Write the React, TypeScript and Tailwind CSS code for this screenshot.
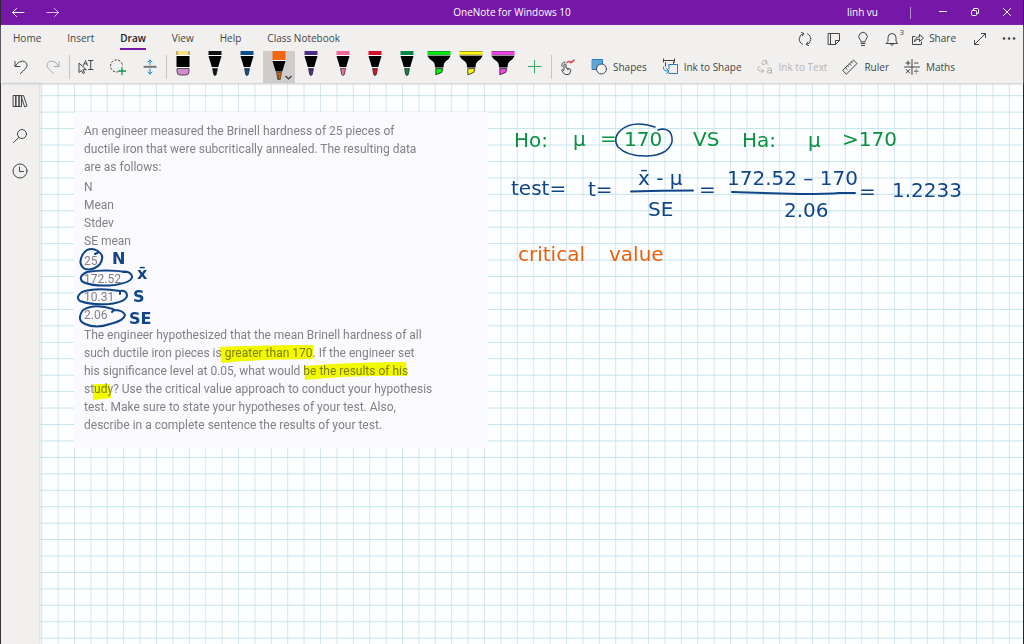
import type { ReactNode } from "react";

const TABS = ["Home", "Insert", "Draw", "View", "Help", "Class Notebook"];

const PENS = [
  { name: "Black pen", color: "#111111" },
  { name: "Blue pen", color: "#0b4f8f" },
  { name: "Orange pen", color: "#f2660f", selected: true },
  { name: "Purple pen", color: "#4f2d86" },
  { name: "Pink pen", color: "#f0679a" },
  { name: "Red pen", color: "#d3122a" },
  { name: "Green pen", color: "#0c8442" },
];

const HIGHLIGHTERS = [
  { name: "Green highlighter", color: "#00f010" },
  { name: "Yellow highlighter", color: "#fdf510" },
  { name: "Magenta highlighter", color: "#f044ea" },
];

const GREEN = "#0c9040";
const BLUE = "#0f4586";
const ORANGE = "#e8600e";

// Handwritten words on the canvas, in page coordinates
const NOTES = [
  { x: 514, y: 147, text: "Ho:", color: GREEN },
  { x: 573, y: 146, text: "μ", color: GREEN },
  { x: 600, y: 145, text: "=", color: GREEN },
  { x: 624, y: 146, text: "170", color: GREEN },
  { x: 693, y: 146, text: "VS", color: GREEN },
  { x: 742, y: 147, text: "Ha:", color: GREEN },
  { x: 808, y: 147, text: "μ", color: GREEN },
  { x: 842, y: 146, text: ">170", color: GREEN },
  { x: 511, y: 195, text: "test=", color: BLUE },
  { x: 588, y: 196, text: "t=", color: BLUE },
  { x: 638, y: 185, text: "x̄ - μ", color: BLUE },
  { x: 648, y: 216, text: "SE", color: BLUE },
  { x: 699, y: 196, text: "=", color: BLUE },
  { x: 727, y: 185, text: "172.52 – 170", color: BLUE },
  { x: 784, y: 217, text: "2.06", color: BLUE },
  { x: 859, y: 198, text: "=", color: BLUE },
  { x: 892, y: 197, text: "1.2233", color: BLUE },
  { x: 518, y: 261, text: "critical", color: ORANGE },
  { x: 609, y: 261, text: "value", color: ORANGE },
];

const LABELS = [
  { x: 112, y: 264, text: "N" },
  { x: 137, y: 279, text: "x̄" },
  { x: 133, y: 302, text: "S" },
  { x: 129, y: 324, text: "SE" },
];

function Icon({
  size = 18,
  className = "",
  children,
}: {
  size?: number;
  className?: string;
  children: ReactNode;
}) {
  return (
    <svg
      width={size}
      height={size}
      viewBox={`0 0 ${size} ${size}`}
      fill="none"
      stroke="currentColor"
      strokeLinecap="round"
      strokeLinejoin="round"
      className={`shrink-0 ${className}`}
      aria-hidden="true"
    >
      {children}
    </svg>
  );
}

function ToolButton({
  label,
  className = "",
  children,
}: {
  label: string;
  className?: string;
  children: ReactNode;
}) {
  return (
    <button
      type="button"
      aria-label={label}
      className={`flex h-8 w-8 shrink-0 items-center justify-center ${className}`}
    >
      {children}
    </button>
  );
}

function Separator() {
  return <span className="mt-1 h-6 w-px shrink-0 bg-[#c8c6c4]" />;
}

function PenIcon({ color, selected }: { color: string; selected?: boolean }) {
  if (selected) {
    return (
      <svg width="32" height="32" viewBox="0 0 32 32" aria-hidden="true">
        <path d="M9.5 0h13v9h-13z" fill={color} />
        <path d="M9.5 9h13v1h-13z" fill="#fff" />
        <path d="M9.5 10h13l-3.2 10.500h-6.600z" fill="#000" />
        <path d="M13.500 21.500h5l-1.300 7h-2.400z" fill={color} stroke="#333" strokeWidth=".7" />
        <path d="M15.600 23v5" stroke="#632b10" strokeWidth=".8" />
        <path d="m22.500 25 3 3 3-3" fill="none" stroke="#333" strokeWidth="1.200" />
      </svg>
    );
  }
  return (
    <svg width="32" height="32" viewBox="0 0 32 32" aria-hidden="true">
      <path d="M9.5 0h13v4h-13z" fill={color} />
      <path d="M9.5 4h13v1h-13z" fill="#fff" />
      <path d="M9.5 5h13l-3.300 11h-6.400z" fill="#000" />
      <path d="M13.500 17.500h5l-1.200 6q-1.300 2-2.600 0z" fill={color} stroke="#222" strokeWidth=".7" />
    </svg>
  );
}

function HighlighterIcon({ color }: { color: string }) {
  return (
    <svg width="32" height="32" viewBox="0 0 32 32" aria-hidden="true">
      <path d="M4.500 0h23v4h-23z" fill={color} />
      <path d="M4.500 0h23v.5h-23zM4.500 3.800h23v.6h-23z" fill="#444" />
      <path d="M4.500 5h23q-1 3-5 5.500-2 1.500-2 6h-8.500q0-4.500-2-6-4-2.500-5.500-5.500z" fill="#000" />
      <path d="M12.800 17.600h7l-1 3.800-6 2.400z" fill={color} stroke="#222" strokeWidth=".8" />
    </svg>
  );
}

function TitleBar() {
  return (
    <header className="grid h-[25px] grid-cols-[1fr_auto_1fr] items-center bg-[#7518a8] text-[10px] text-white">
      <div className="flex items-center">
        <button type="button" aria-label="Back" className="flex w-[34px] justify-center">
          <Icon size={14}>
            <path d="M13 6.500H1.500M5.500 2.500l-4 4 4 4" />
          </Icon>
        </button>
        <button type="button" aria-label="Forward" className="flex w-9 justify-center text-white/70">
          <Icon size={14}>
            <path d="M1 6.500h11.500M8.500 2.500l4 4-4 4" />
          </Icon>
        </button>
      </div>
      <h1>OneNote for Windows 10</h1>
      <div className="flex items-center justify-end">
        <span className="mr-8">linh vu</span>
        <span className="h-3 w-px bg-white/50" />
        <button type="button" aria-label="Minimise" className="ml-4 flex w-8 justify-center">
          <Icon size={10}>
            <path d="M1.500 3.500h7" />
          </Icon>
        </button>
        <button type="button" aria-label="Restore" className="flex w-8 justify-center">
          <Icon size={10}>
            <rect x="1.500" y="2.500" width="5" height="5" rx="1" />
            <path d="M3.500 2.500V1q0-.5.500-.5h3.500q1 0 1 1v3.500q0 .5-.5.500h-1" />
          </Icon>
        </button>
        <button type="button" aria-label="Close" className="flex w-8 justify-center">
          <Icon size={10}>
            <path d="m1.500.5 7 7m0-7-7 7" />
          </Icon>
        </button>
      </div>
    </header>
  );
}

function MenuRow() {
  return (
    <div className="flex h-[25px] items-stretch justify-between pl-3 text-[10px]">
      <nav className="flex gap-[26px]">
        {TABS.map((tab) => (
          <button
            key={tab}
            type="button"
            className={
              tab === "Draw"
                ? "border-b-2 border-[#7518a8] pt-[3px] font-semibold text-[#222]"
                : "border-b-2 border-transparent pt-[3px]"
            }
          >
            {tab}
          </button>
        ))}
      </nav>
      <div className="flex items-center pt-[2px]">
        <button type="button" aria-label="Sync" className="flex w-[29px] justify-center">
          <Icon size={16}>
            <path d="M5.500 13.200A5.800 5.800 0 0 1 6.500 2.400M10.500 2.800a5.800 5.800 0 0 1-1 10.800M4.500 1.500l2.200 1-1.200 2.300M11.500 14.500l-2.200-1 1.200-2.300" />
          </Icon>
        </button>
        <button type="button" aria-label="Feed" className="flex w-[29px] justify-center">
          <Icon size={14}>
            <path d="M1.500 1.500h11v7l-4 4h-7zM3.500 1.500v11M12.500 8.500h-4v4" />
          </Icon>
        </button>
        <button type="button" aria-label="Tell me" className="flex w-[29px] justify-center">
          <Icon size={16}>
            <path d="M6 10.500Q6 9.500 5 8.500a4.200 4.200 0 1 1 6 0q-1 1-1 2zM6 12.500h4M6.500 14.500h3" />
          </Icon>
        </button>
        <button type="button" aria-label="Notifications" className="relative flex w-[29px] justify-center">
          <Icon size={16}>
            <path d="M2.500 12.500h11l-1.500-2.500V6.500a4 4 0 0 0-8 0V10zM6.500 13q1.500 3 3 0" />
          </Icon>
          <span className="absolute -top-1 right-[2px] text-[8px] leading-[10px]">3</span>
        </button>
        <button type="button" className="ml-[5px] flex items-center gap-1">
          <Icon size={14}>
            <path d="M4 4.500H1.500v8h9V10M3.500 9.500q.5-4.500 5-4.500V2.500L12.500 6 8.500 9.500V7Q5.500 7 3.500 9.500" />
          </Icon>
          Share
        </button>
        <button type="button" aria-label="Full screen" className="ml-[10px] flex w-[28px] justify-center">
          <Icon size={14}>
            <path d="m1.500 12.500 11-11M8.500 1.500h4v4M1.500 8.500v4h4" />
          </Icon>
        </button>
        <button type="button" aria-label="More" className="flex w-[29px] justify-center">
          <Icon size={14}>
            <path d="M2 6.500h.1M7 6.500h.1M12 6.500h.1" strokeWidth="2.600" />
          </Icon>
        </button>
      </div>
    </div>
  );
}

function DrawToolbar() {
  return (
    <div className="flex pt-px pl-1 text-[10px]">
      <ToolButton label="Undo">
        <Icon>
          <path d="M3 3.500v5h5M3 8.500Q6 3 10.500 3q4.500.5 4.500 4.500 0 2.500-6.500 8" />
        </Icon>
      </ToolButton>
      <ToolButton label="Redo" className="text-[#a8a8a8]">
        <Icon>
          <path d="M15 3.500v5h-5M15 8.500Q12 3 7.500 3 3 3.500 3 7.500q0 2.500 6.500 8" />
        </Icon>
      </ToolButton>
      <Separator />
      <ToolButton label="Select or type">
        <Icon>
          <path d="M2 5.500v9l2.500-2 1.500 3 1.500-.8-1.500-3h3z" />
          <path d="m6.500 7.500 2-5 2 5M7.300 5.800h2.500" strokeWidth=".9" />
          <path d="M11.500 2.500h2m0 0h2.500M13.700 2.500v9M11.500 11.500h4.500" />
        </Icon>
      </ToolButton>
      <ToolButton label="Lasso select">
        <Icon>
          <circle cx="7.500" cy="8" r="6" strokeDasharray="1.500 2.200" />
          <path d="M9 8h8v9H9z" fill="#f1f0ef" stroke="none" />
          <path d="M13 9.500v7M9.500 13h7" stroke="#10944c" strokeWidth="1.300" />
        </Icon>
      </ToolButton>
      <ToolButton label="Insert space">
        <Icon>
          <path d="M2.500 8.800h13" stroke="#777" strokeWidth="2" strokeLinecap="butt" />
          <path d="M9 6.500v-4.500M7 4l2-2 2 2M9 11v5M7 14l2 2 2-2" stroke="#1682c9" />
        </Icon>
      </ToolButton>
      <Separator />
      <ToolButton label="Eraser">
        <svg width="32" height="32" viewBox="0 0 32 32" aria-hidden="true">
          <path d="M9.500 0h13v4h-13z" fill="#f6df86" />
          <path d="M9.500 0h1v4h-1zM21.500 0h1v4h-1z" fill="#8a7d50" />
          <path d="M9.500 4h13v1h-13zM9.500 16h13v1h-13z" fill="#fff" />
          <path d="M9.500 5h13v11h-13z" fill="#000" />
          <path d="M10 17.500h12v3q0 3.500-3 3.500h-6q-3 0-3-3.500z" fill="#d28ad2" stroke="#333" strokeWidth=".8" />
        </svg>
      </ToolButton>
      {PENS.map((pen) => (
        <ToolButton
          key={pen.name}
          label={pen.name}
          className={pen.selected ? "bg-[#cfcdcc]" : ""}
        >
          <PenIcon color={pen.color} selected={pen.selected} />
        </ToolButton>
      ))}
      {HIGHLIGHTERS.map((pen) => (
        <ToolButton key={pen.name} label={pen.name}>
          <HighlighterIcon color={pen.color} />
        </ToolButton>
      ))}
      <ToolButton label="Add pen" className="text-[#2fa562]">
        <Icon size={14}>
          <path d="M6.500 0v13M0 6.500h13" />
        </Icon>
      </ToolButton>
      <Separator />
      <ToolButton label="Draw with touch">
        <Icon>
          <path d="M5 11.500V6.500q1-1.500 2 0V10l4 1q1 .3.800 1.300L11 15Q10.500 16.500 9 16.500H7Q5.500 16.500 4.500 15L2.500 12q1-1.500 2.500.5M9 10.500v1.500" />
          <path d="M3 8.500q-1-4.500 3-4.500" />
          <path d="M8 4.500q2-2 3-.5t4-2" stroke="#e0343c" strokeWidth="1.400" />
        </Icon>
      </ToolButton>
      <button type="button" className="ml-[6px] flex items-center gap-[5px]">
        <Icon>
          <path d="M2.500 1.500h10v10h-10z" fill="#5ba7dc" stroke="#257dbe" />
          <circle cx="11.500" cy="11" r="5" fill="#f5f4f3" stroke="#444" />
        </Icon>
        Shapes
      </button>
      <button type="button" className="ml-[14px] flex items-center gap-[5px]">
        <Icon>
          <path d="M3 2.500h10M2.500 1v3M13.500 1v3" />
          <path d="M4.500 4.500V8M12.500 4v1.500" />
          <path d="M8 6.500h8.500v9H8v-1M8 6.500V11" stroke="#257dbe" />
          <path d="M2.500 9q-1 4.500 5 4M5.500 10.500l2.500 2.500-2.500 2.500" stroke="#257dbe" />
        </Icon>
        Ink to Shape
      </button>
      <button type="button" disabled className="ml-[14px] flex items-center gap-[5px] text-[#b5b3b2]">
        <Icon>
          <path d="M10.500 2.500Q6.500 1.500 6 5q0 2 2 1.500 2-1 2.500-4-.5 4 1.500 4" />
          <path d="M3.500 8.500q-4 3 1 4.500h3M5.500 11l2 2-2 2" />
          <path d="M11.500 10.500q3-1.500 4 .5v4.500M15.500 12.500q-5-.5-4.500 1.500 1.500 2.500 4.500 0" />
        </Icon>
        Ink to Text
      </button>
      <button type="button" className="ml-[14px] flex items-center gap-[5px]">
        <Icon>
          <path d="M2 12 12.500 2 16 5.500 5.500 16zM4.500 9.700l1.500 1.500M6.500 7.800l1 1M8.500 5.800l1.500 1.500M10.500 4l1 1" />
        </Icon>
        Ruler
      </button>
      <button type="button" className="ml-[14px] flex items-center gap-[5px]">
        <Icon>
          <path d="M9 1.500v15M1.500 9h15M3 5h4M5 3v4M11.500 5H15M3.200 11.500l3.500 3.500m0-3.500L3.200 15M11.500 13.200H15M13.200 11.300h.1M13.200 15.200h.1" />
        </Icon>
        Maths
      </button>
    </div>
  );
}

function SideBar() {
  return (
    <aside className="z-10 flex w-[38px] shrink-0 flex-col items-center gap-[3px] bg-[#f1f0ef] pt-[2px] shadow-[1px_0_2px_#d5d5d5]">
      <ToolButton label="Show navigation">
        <Icon>
          <path d="M2.500 3.500h2.500v11H2.500zM5 3.500h3v11H5zM8.500 3.500h2v11h-2zM10.500 4l2-.5 3.500 10.500-2 .7z" />
        </Icon>
      </ToolButton>
      <ToolButton label="Search">
        <Icon>
          <circle cx="11" cy="7" r="4.500" />
          <path d="M7.700 10.500 2.500 15.500" />
        </Icon>
      </ToolButton>
      <ToolButton label="Recent notes">
        <Icon>
          <circle cx="9" cy="9" r="7" />
          <path d="M8.500 5v4.500h4" />
        </Icon>
      </ToolButton>
    </aside>
  );
}

function RuledPaper() {
  return (
    <svg className="absolute inset-0 h-full w-full" aria-hidden="true">
      <defs>
        <pattern id="squares" x="2.200" y="12.200" width="16.400" height="16.440" patternUnits="userSpaceOnUse">
          <path d="M.5 0v17" stroke="#d3e5ee" />
          <path d="M0 .5h17" stroke="#c3e3ec" />
        </pattern>
      </defs>
      <rect width="100%" height="100%" fill="url(#squares)" />
    </svg>
  );
}

function ProblemCard() {
  return (
    <article className="absolute top-[29px] left-[35px] flex w-[414px] flex-col gap-[2px] bg-[#f9f9fe] pt-[10px] pr-10 pb-[14px] pl-[10px] font-[Roboto,sans-serif] text-[12px] leading-[18px] text-[#808086]">
      <p>
        An engineer measured the Brinell hardness of 25 pieces of
        <br />
        ductile iron that were subcritically annealed. The resulting data
        <br />
        are as follows:
      </p>
      <ul>
        <li>N</li>
        <li>Mean</li>
        <li>Stdev</li>
        <li>SE mean</li>
      </ul>
      <ul>
        <li>25</li>
        <li>172.52</li>
        <li>10.31</li>
        <li>2.06</li>
      </ul>
      <p className="whitespace-nowrap">
        The engineer hypothesized that the mean Brinell hardness of all
        <br />
        such ductile iron pieces is greater than 170. If the engineer set
        <br />
        his significance level at 0.05, what would be the results of his
        <br />
        study? Use the critical value approach to conduct your hypothesis
        <br />
        test. Make sure to state your hypotheses of your test. Also,
        <br />
        describe in a complete sentence the results of your test.
      </p>
    </article>
  );
}

function Ink() {
  return (
    <>
      {/* highlighter strokes let the text show through */}
      <svg
        width="984"
        height="561"
        viewBox="39 83 984 561"
        className="pointer-events-none absolute top-0 left-0 mix-blend-multiply"
        aria-hidden="true"
      >
        <g fill="#f8ff00">
          <path d="M220 347q40-2 94-2l-1 14q-50 0-92 4z" />
          <path d="M304 366q50-4 102-4l1 14q-50-1-102 4z" />
          <path d="M93 384h17l1 14-18 2z" />
        </g>
      </svg>
      <svg
        width="984"
        height="561"
        viewBox="39 83 984 561"
        className="pointer-events-none absolute top-0 left-0 font-['DejaVu_Sans',sans-serif] text-[20px]"
      >
        <g fill="none" stroke={BLUE} strokeWidth="2" strokeLinecap="round" strokeLinejoin="round">
          <path d="M98 251q-9-5-15 3-6 10 2 15 9 2 15-5 5-8-1-12l-4 2" />
          <path d="M127 272q-22-3-40 0-10 5-4 10 10 5 32 3 18-3 17-9-2-5-9-4" />
          <path d="M120 291q-24-4-38 1-7 5-2 9 10 4 29 3 18-2 18-9-1-5-7-4v3" />
          <path d="M113 309q-19-6-30 1-7 10 2 14 11 5 25 0 14-3 15-9-2-5-11-5l-2 2" />
          <path d="M631 191.500q30-1 62-1M732 192q30 1 68 2 30 0 39-1h16" />
        </g>
        <path
          d="M655 127q-22-7-34 3-9 8-3 17 10 10 30 9 20-1 24-14 1-13-10-13l-4 1"
          fill="none"
          stroke={BLUE}
          strokeWidth="1.500"
          strokeLinecap="round"
        />
        {NOTES.map((note) => (
          <text key={`${note.x}-${note.y}`} x={note.x} y={note.y} fill={note.color}>
            {note.text}
          </text>
        ))}
        <g fill={BLUE} className="text-[16px] font-bold">
          {LABELS.map((label) => (
            <text key={label.y} x={label.x} y={label.y}>
              {label.text}
            </text>
          ))}
        </g>
      </svg>
    </>
  );
}

export default function App() {
  return (
    <div className="flex min-h-screen flex-col border-x border-[#2b2430] bg-[#f1f0ef] font-['Open_Sans',sans-serif] text-[#444]">
      <TitleBar />
      <div className="z-20 shadow-[0_1px_2px_#c4c4c4]">
        <MenuRow />
        <DrawToolbar />
      </div>
      <div className="flex flex-1">
        <SideBar />
        <main className="relative isolate flex-1 overflow-hidden bg-[#fdfeff]">
          <RuledPaper />
          <ProblemCard />
          <Ink />
        </main>
      </div>
    </div>
  );
}
